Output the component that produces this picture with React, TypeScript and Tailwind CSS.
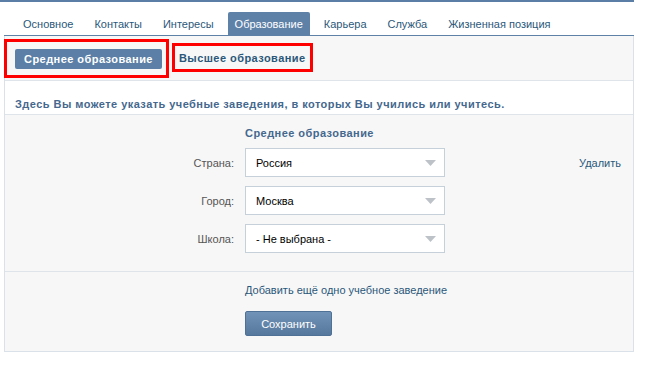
const tabs = ["Основное", "Контакты", "Интересы", "Образование", "Карьера", "Служба", "Жизненная позиция"];

function Select({ value }: { value: string }) {
  return (
    <div className="h-[29px] w-[200px] bg-white border border-[#c5d0da] flex items-center justify-between pl-[10px] pr-[8px] text-[#000]">
      <span>{value}</span>
      <svg width="11" height="6" viewBox="0 0 11 6">
        <path d="M0 0h11L5.5 6z" fill="#bcc2c8" />
      </svg>
    </div>
  );
}

const rows = [
  { label: "Страна:", value: "Россия" },
  { label: "Город:", value: "Москва" },
  { label: "Школа:", value: "- Не выбрана -" },
];

export default function App() {
  return (
    <div className="w-[650px] h-[372px] bg-white text-[11px] leading-[14px] font-['Liberation_Sans',Arial,sans-serif] overflow-hidden">
      <div className="w-[634px] border-t-2 border-[#5b7ea6]">
        <div className="ml-[4px]">
          <div className="flex gap-[7px] pl-[12px] pt-[10px] border-b border-[#5e81a8]">
            {tabs.map((t) => (
              <div
                key={t}
                className={
                  t === "Образование"
                    ? "h-[23px] px-[7px] flex items-center bg-[#5e81a8] text-white rounded-t-[2px]"
                    : "h-[23px] px-[7px] flex items-center text-[#2b587a]"
                }
              >
                {t}
              </div>
            ))}
          </div>

          <div className="border-x border-b border-[#dae1e8]">
            <div className="h-[45px] bg-[#f7f7f7] border-b border-[#dee4ea] flex items-start">
              <div className="-ml-px mt-[3px] border-[3px] border-[#f00] pl-[8px] pr-[4px] pt-[7px] pb-[6px]">
                <div className="h-[20px] px-[9px] flex items-center bg-[#5b7fa6] rounded-[2px] text-white font-bold tracking-[0.45px]">
                  Среднее образование
                </div>
              </div>
              <div className="ml-[3px] mt-[7px] h-[29px] border-[3px] border-[#f00] pl-[4px] pr-[4px] flex items-center text-[#2b587a] font-bold tracking-[0.45px]">
                Высшее образование
              </div>
            </div>

            <div className="bg-white pl-[10px] pt-[16px] pb-[3px] border-b border-[#dee4ea] font-bold text-[#45688e] tracking-[0.45px]">
              Здесь Вы можете указать учебные заведения, в которых Вы учились или учитесь.
            </div>

            <div className="bg-[#f7f7f7] pt-[11px] pb-[18px] border-b border-[#dee4ea]">
              <div className="grid grid-cols-[240px_200px_1fr] gap-y-[9px] items-center">
                <div />
                <div className="font-bold text-[#45688e] tracking-[0.45px] -mb-px">Среднее образование</div>
                <div />
                {rows.map((r, i) => (
                  <div key={r.label} className="contents">
                    <div className="text-right pr-[11px] text-[#555]">{r.label}</div>
                    <Select value={r.value} />
                    <div className="text-right pr-[12px] text-[#2b587a]">{i === 0 ? "Удалить" : ""}</div>
                  </div>
                ))}
              </div>
            </div>

            <div className="bg-[#f7f7f7] pl-[240px] pt-[11px] pb-[15px]">
              <div className="text-[#2b587a]">Добавить ещё одно учебное заведение</div>
              <button className="mt-[14px] h-[25px] w-[87px] rounded-[2px] bg-gradient-to-b from-[#7193b8] to-[#56789c] text-white border border-[#4f7196]">
                Сохранить
              </button>
            </div>
          </div>
        </div>
      </div>
    </div>
  );
}
